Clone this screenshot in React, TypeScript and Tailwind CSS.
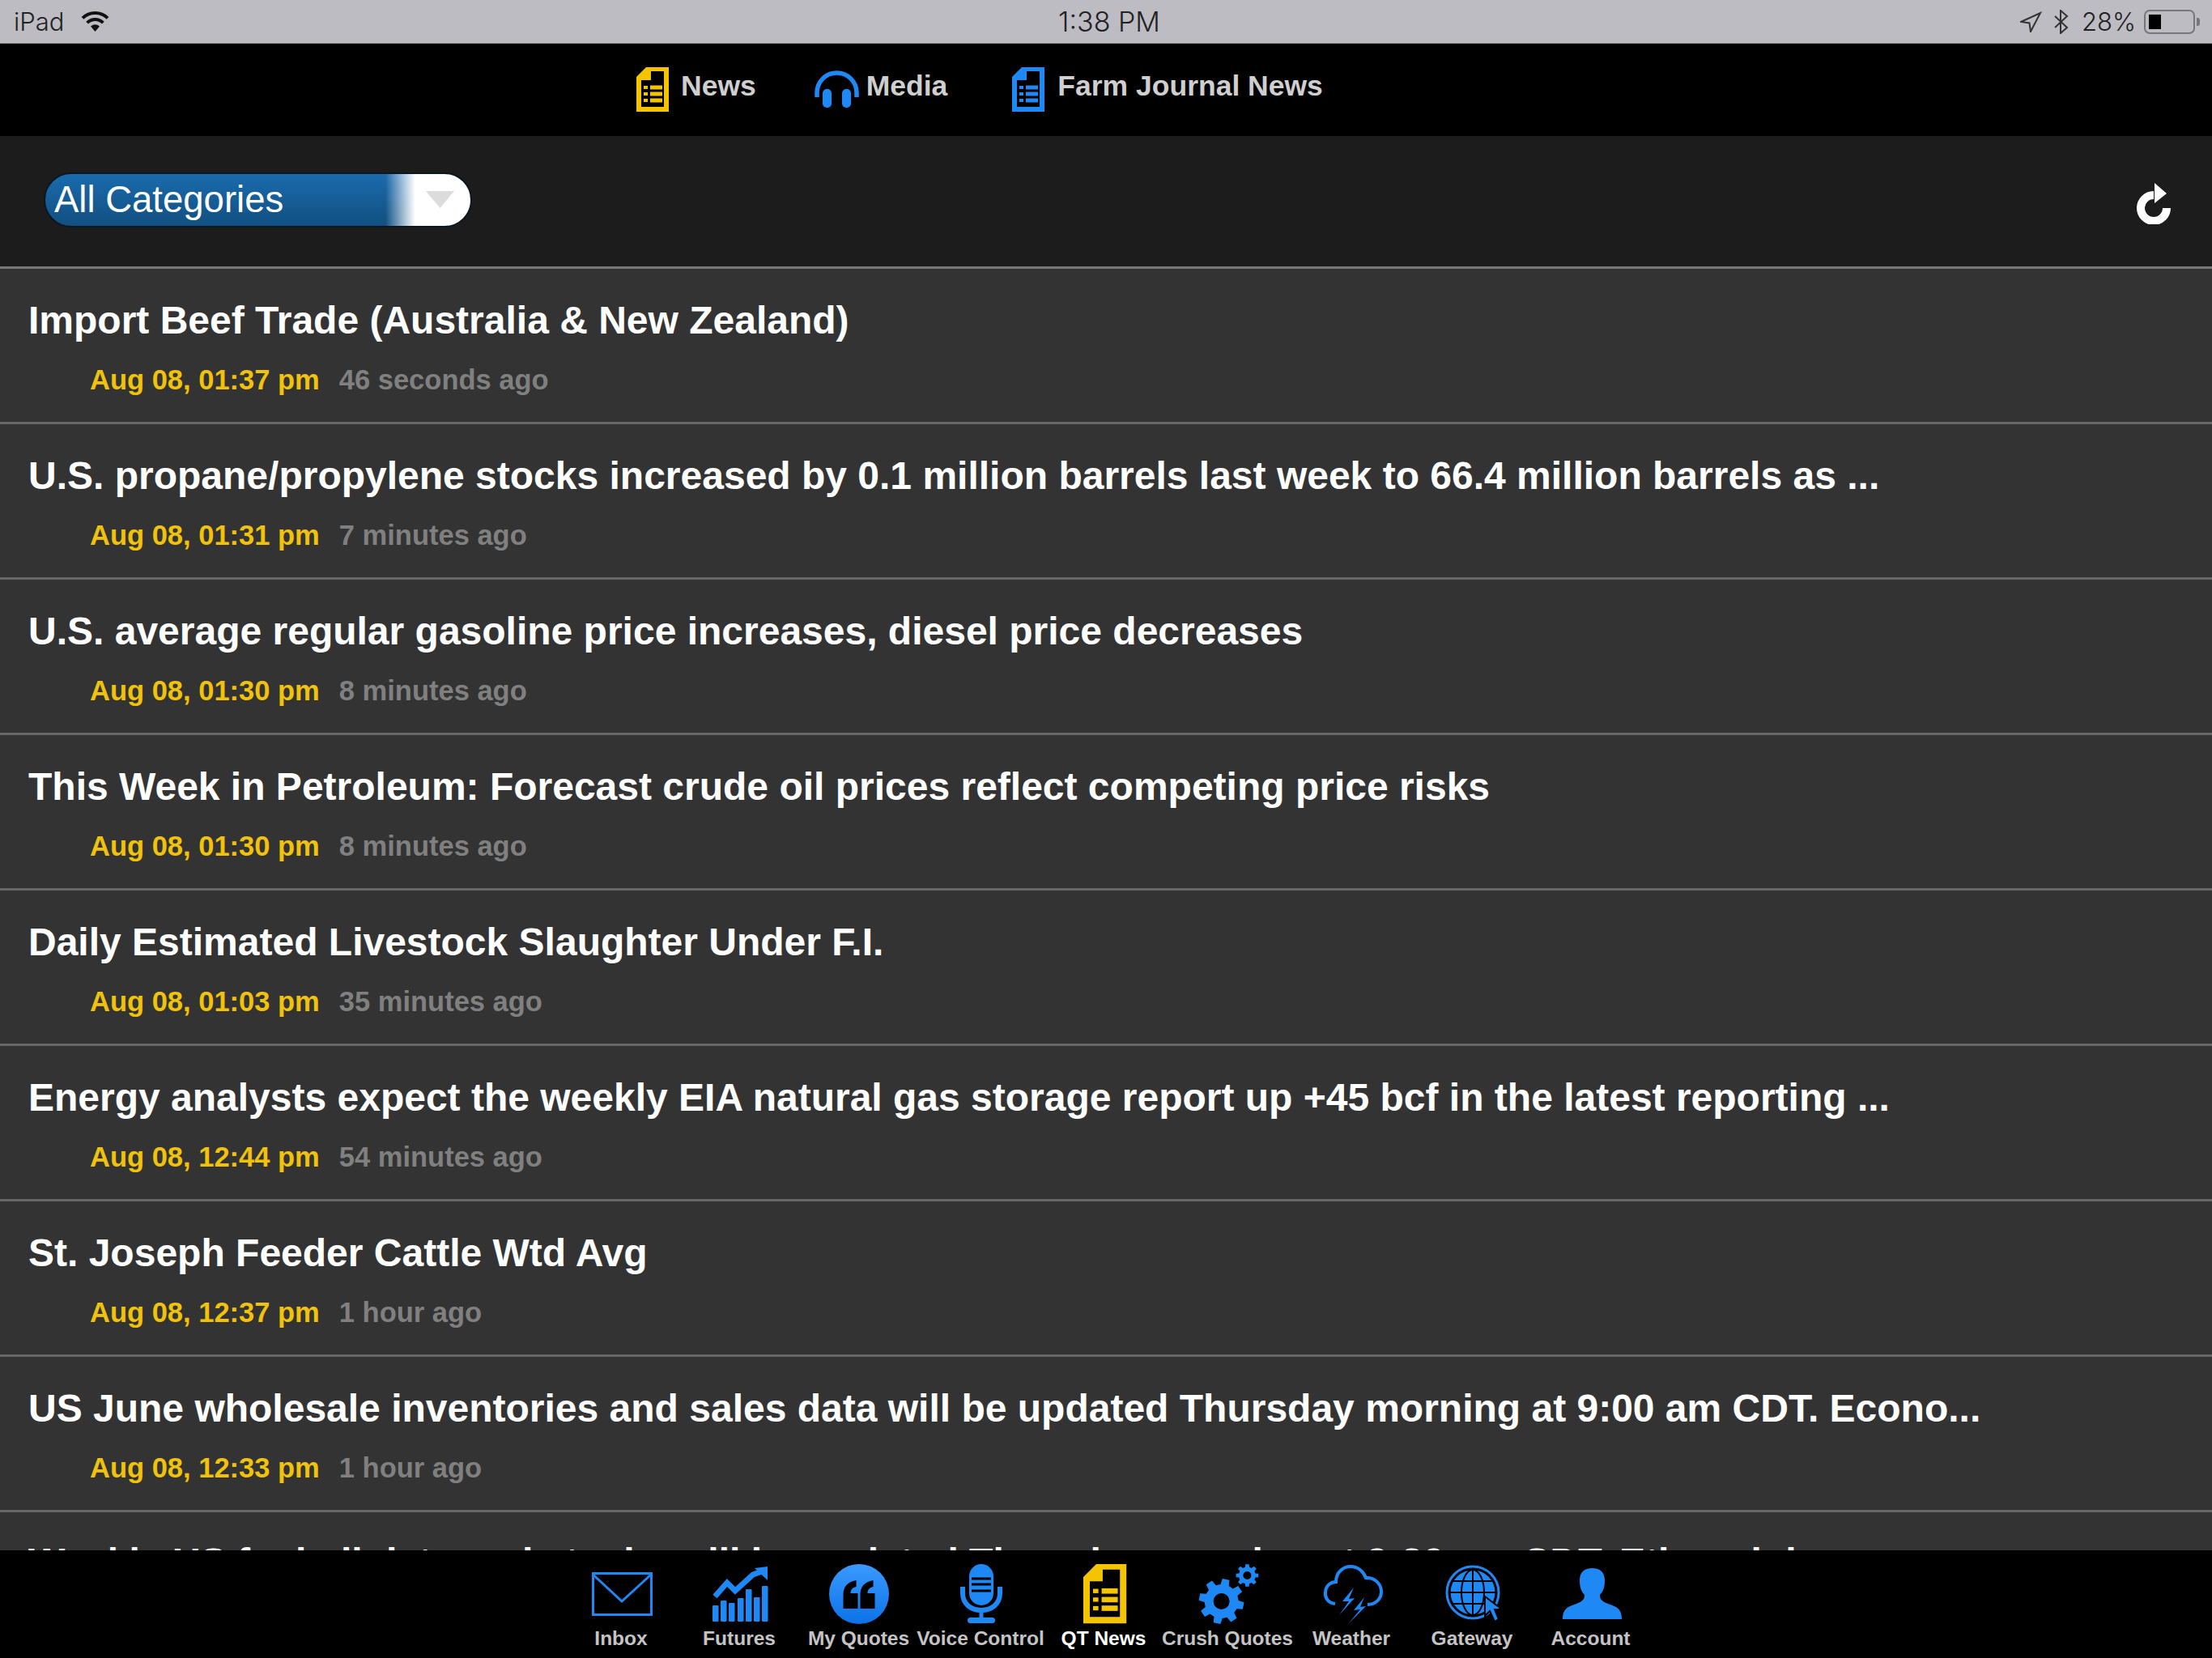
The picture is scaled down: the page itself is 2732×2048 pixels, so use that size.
import React from "react";

const BLUE = "#1e88f5";
const YELLOW = "#f5c400";

const rows = [
  ["Import Beef Trade (Australia & New Zealand)", "Aug 08, 01:37 pm", "46 seconds ago"],
  ["U.S. propane/propylene stocks increased by 0.1 million barrels last week to 66.4 million barrels as ...", "Aug 08, 01:31 pm", "7 minutes ago"],
  ["U.S. average regular gasoline price increases, diesel price decreases", "Aug 08, 01:30 pm", "8 minutes ago"],
  ["This Week in Petroleum: Forecast crude oil prices reflect competing price risks", "Aug 08, 01:30 pm", "8 minutes ago"],
  ["Daily Estimated Livestock Slaughter Under F.I.", "Aug 08, 01:03 pm", "35 minutes ago"],
  ["Energy analysts expect the weekly EIA natural gas storage report up +45 bcf in the latest reporting ...", "Aug 08, 12:44 pm", "54 minutes ago"],
  ["St. Joseph Feeder Cattle Wtd Avg", "Aug 08, 12:37 pm", "1 hour ago"],
  ["US June wholesale inventories and sales data will be updated Thursday morning at 9:00 am CDT. Econo...", "Aug 08, 12:33 pm", "1 hour ago"],
  ["Weekly US fuel oil data and stocks will be updated Thursday morning at 9:30 am CDT. Ethanol da...", "Aug 08, 12:30 pm", "1 hour ago"],
];

function DocPaths({ color }: { color: string }) {
  return (
    <>
      <path d="M12 0H40V55H0V12Z" fill={color} />
      <path d="M18 5H34V49H6V16H18Z" fill="#000" />
      {[25, 33, 41].map((y) => (
        <g key={y} fill={color}>
          <rect x="17" y={y - 2.5} width="15" height="5" />
          <rect x="9" y={y - 2} width="5" height="4" />
        </g>
      ))}
    </>
  );
}

function gearPath(cx: number, cy: number, ro: number, ri: number, teeth: number, rot = 0) {
  const step = (Math.PI * 2) / teeth;
  const pts: string[] = [];
  for (let i = 0; i < teeth; i++) {
    const a = rot + i * step;
    const list: [number, number][] = [
      [ri, a - step * 0.32],
      [ro, a - step * 0.2],
      [ro, a + step * 0.2],
      [ri, a + step * 0.32],
    ];
    for (const [r, t] of list) {
      pts.push(`${(cx + r * Math.cos(t)).toFixed(2)} ${(cy + r * Math.sin(t)).toFixed(2)}`);
    }
  }
  return "M" + pts.join("L") + "Z";
}

const tabIcons: Record<string, React.ReactNode> = {
  Inbox: (
    <g fill="none" stroke={BLUE} strokeWidth="3">
      <rect x="15.5" y="15.5" width="72" height="51" />
      <path d="M15.5 17L51 50L87 17" />
    </g>
  ),
  Futures: (
    <g fill={BLUE}>
      {[
        [17, 55],
        [27, 49],
        [37, 52],
        [48, 46],
        [58, 35],
        [68, 45],
        [78, 31],
      ].map(([x, y]) => (
        <rect key={x} x={x} y={y} width="7.5" height={75 - y} rx="1" />
      ))}
      <path d="M20 44L35 27L45 37L67 17L78 13" fill="none" stroke={BLUE} strokeWidth="7" />
      <path d="M85 7V24L69 9Z" />
    </g>
  ),
  "My Quotes": (
    <g>
      <defs>
        <linearGradient id="q" x1="0" y1="0" x2="0" y2="1">
          <stop offset="0" stopColor="#3a9aff" />
          <stop offset="1" stopColor="#0c72e6" />
        </linearGradient>
      </defs>
      <circle cx="50" cy="41" r="37" fill="url(#q)" />
      {[-2.5, 18.5].map((d) => (
        <path
          key={d}
          transform={`translate(${d} 0)`}
          d="M33 59V42C33 32 38 26 49 24V32C44 33 42 36 42 40H51V59Z"
          fill="#000"
        />
      ))}
    </g>
  ),
  "Voice Control": (
    <g>
      <rect x="36" y="4" width="30" height="51" rx="15" fill={BLUE} />
      <path d="M39 22H63M39 29H63M39 37H63" stroke="#000" strokeWidth="3" />
      <path d="M28 32V40C28 53 38 61 51 61C64 61 74 53 74 40V32" fill="none" stroke={BLUE} strokeWidth="6" />
      <path d="M51 61V72" stroke={BLUE} strokeWidth="5" />
      <rect x="34" y="70" width="34" height="7" rx="3.5" fill={BLUE} />
    </g>
  ),
  "QT News": (
    <g transform="translate(25 4) scale(1.33)">
      <DocPaths color={YELLOW} />
    </g>
  ),
  "Crush Quotes": (
    <g fill={BLUE}>
      <path d={gearPath(42.6, 50, 28, 21, 8, 0.2) + " M52.6 50a10 10 0 1 0-20 0a10 10 0 1 0 20 0Z"} fillRule="evenodd" />
      <path d={gearPath(74.4, 18, 14, 10.5, 8, 0) + " M79.4 18a5 5 0 1 0-10 0a5 5 0 1 0 10 0Z"} fillRule="evenodd" />
    </g>
  ),
  Weather: (
    <g>
      <path
        d="M30 53C20 52 17 44 18 38C19 30 25 26 31 26C31 14 40 7 49 7C58 7 65 13 68 21C78 20 87 28 87 38C87 47 80 54 70 54"
        fill="none"
        stroke={BLUE}
        strokeWidth="4"
      />
      <polygon points="53,33 39,50 47,50 35,67 54,46 47,47" fill={BLUE} />
      <polygon points="66,45 53,61 61,60 46,78 68,56 61,57" fill={BLUE} />
    </g>
  ),
  Gateway: (
    <g>
      <circle cx="51" cy="39" r="32" fill="none" stroke={BLUE} strokeWidth="3" />
      <circle cx="51" cy="39" r="27.5" fill={BLUE} />
      <g fill="none" stroke="#000" strokeWidth="2">
        <ellipse cx="51" cy="39" rx="14" ry="28" />
        <path d="M51 10V68M23 39H79M27 25H75M27 53H75" />
      </g>
      <polygon points="66,44 66,68 72,62 78,75 83,72 78,60 87,60" fill={BLUE} stroke="#000" strokeWidth="2" />
    </g>
  ),
  Account: (
    <path
      d="M15 72C15 60 20 57 32 53C40 50 42 47 42 42C37 37 36 30 36 24C36 14 42 9 51.5 9C61 9 67 14 67 24C67 30 66 37 61 42C61 47 63 50 71 53C83 57 88 60 88 72Z"
      fill={BLUE}
    />
  ),
};

const tabs = [
  { label: "Inbox", width: "w-[146px]", text: "text-[#c4c4c4]" },
  { label: "Futures", width: "w-[146px]", text: "text-[#c4c4c4]" },
  { label: "My Quotes", width: "w-[149px]", text: "text-[#c4c4c4]" },
  { label: "Voice Control", width: "w-[152px]", text: "text-[#c4c4c4]" },
  { label: "QT News", width: "w-[152px]", text: "text-white" },
  { label: "Crush Quotes", width: "w-[154px]", text: "text-[#c4c4c4]" },
  { label: "Weather", width: "w-[152px]", text: "text-[#c4c4c4]" },
  { label: "Gateway", width: "w-[146px]", text: "text-[#c4c4c4]" },
  { label: "Account", width: "w-[147px]", text: "text-[#c4c4c4]" },
];

export default function App() {
  return (
    <div className="flex h-[2048px] w-[2732px] flex-col overflow-hidden bg-black font-['Liberation_Sans',Arial,sans-serif]">
      {/* Status bar */}
      <div className="grid h-[54px] shrink-0 grid-cols-3 items-center border-b border-[#8a8a8e] bg-[#bdbcc2] pl-[17px] pr-[15px] font-['Inter',sans-serif] text-[31px] font-light leading-none text-[#222]">
        <div className="flex items-center gap-[20px]">
          <span>iPad</span>
          <svg className="h-[27px] w-[37px]" viewBox="0 0 37 27">
            <path d="M3 9.4A22 22 0 0 1 34 9.4M8.6 15.1A14 14 0 0 1 28.4 15.1" fill="none" stroke="#111" strokeWidth="4" />
            <path d="M13 19.5Q18.5 15 24 19.5L18.5 26Z" fill="#111" />
          </svg>
        </div>
        <div className="pl-[6px] text-center text-[34px]">1:38 PM</div>
        <div className="flex items-center justify-end">
          <svg className="h-[26px] w-[27px]" viewBox="0 0 27 26">
            <path d="M1 13L25 2L13 25L11.5 14.5Z" fill="none" stroke="#333" strokeWidth="2" strokeLinejoin="miter" />
          </svg>
          <svg className="ml-[14px] h-[30px] w-[19px]" viewBox="0 0 19 30">
            <path d="M2 8L17 22L9 29V1L17 8L2 22" fill="none" stroke="#333" strokeWidth="2" />
          </svg>
          <span className="ml-[16px]">28%</span>
          <div className="ml-[10px] flex items-center gap-[2px]">
            <div className="flex h-[30px] w-[63px] items-center rounded-[7px] border-2 border-[#77777a] px-[4px]">
              <div className="h-[18px] w-[15px] bg-black" />
            </div>
            <div className="h-[10px] w-[4px] rounded-r-[3px] bg-[#77777a]" />
          </div>
        </div>
      </div>

      {/* Top nav */}
      <div className="flex h-[114px] shrink-0 items-center bg-black pb-[2px] pl-[786px] text-[35.5px] font-bold leading-none text-[#cfcfcf]">
        <svg className="h-[55px] w-[40px]" viewBox="0 0 40 55">
          <DocPaths color={YELLOW} />
        </svg>
        <span className="mb-[7px] ml-[15px]">News</span>
        <svg className="ml-[72px] h-[46px] w-[55px]" viewBox="0 0 55 46">
          <path d="M3 33V27.5A24.5 24.5 0 0 1 52 27.5V33" fill="none" stroke={BLUE} strokeWidth="5.5" />
          <rect x="10" y="23" width="11" height="23" rx="5" fill={BLUE} />
          <rect x="34" y="23" width="11" height="23" rx="5" fill={BLUE} />
        </svg>
        <span className="mb-[7px] ml-[9px]">Media</span>
        <svg className="ml-[80px] h-[55px] w-[40px]" viewBox="0 0 40 55">
          <DocPaths color={BLUE} />
        </svg>
        <span className="mb-[7px] ml-[16px]">Farm Journal News</span>
      </div>

      {/* Toolbar */}
      <div className="flex h-[164px] shrink-0 items-center justify-between border-b-[3px] border-[#777] bg-[#1c1c1c] pb-[4px] pl-[54px] pr-[50px]">
        <div className="flex h-[68px] w-[529px] items-center justify-between rounded-full border-2 border-[#0a1622] bg-[linear-gradient(90deg,rgba(255,255,255,0)_80%,#fff_87%),linear-gradient(180deg,#1a6bad,#124f80)] pl-[11px] pr-[20px]">
          <span className="text-[45.5px] leading-none text-white">All Categories</span>
          <svg className="h-[21px] w-[35px]" viewBox="0 0 35 21">
            <polygon points="0,0 35,0 17.5,21" fill="#dcdcdc" />
          </svg>
        </div>
        <svg className="mt-[10px] h-[51px] w-[43px]" viewBox="0 0 43 51">
          <path d="M21 15A16 16 0 1 0 37 31" fill="none" stroke="#fff" strokeWidth="10" />
          <polygon points="22,0 37,13 22,25" fill="#fff" />
        </svg>
      </div>

      {/* List */}
      <div className="min-h-0 flex-1 overflow-hidden bg-[#333333]">
        {rows.map(([title, date, ago]) => (
          <div key={title} className="h-[192px] border-b-[3px] border-[#666] pl-[35px] pt-[36px] last:pt-[34px]">
            <div className="whitespace-nowrap text-[48px] font-bold leading-[56px] text-white">{title}</div>
            <div className="ml-[76px] mt-[25px] flex gap-[24px] text-[34.5px] font-bold leading-[40px]">
              <span className="text-[#f0c20c]">{date}</span>
              <span className="text-[#808080]">{ago}</span>
            </div>
          </div>
        ))}
      </div>

      {/* Bottom tab bar */}
      <div className="flex h-[133px] shrink-0 justify-center bg-black pt-[13px]">
        {tabs.map((t) => (
          <div key={t.label} className={`flex flex-col items-center ${t.width}`}>
            <svg className="h-[80px] w-[100px]" viewBox="0 0 100 80">
              {tabIcons[t.label]}
            </svg>
            <span className={`whitespace-nowrap pt-[1px] text-[24.5px] font-bold leading-[30px] ${t.text}`}>{t.label}</span>
          </div>
        ))}
      </div>
    </div>
  );
}
